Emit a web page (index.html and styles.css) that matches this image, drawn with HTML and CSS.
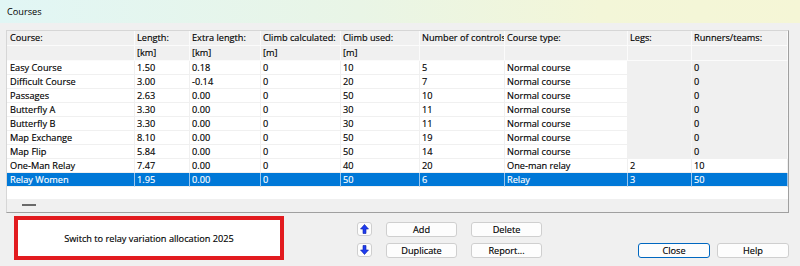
FILE: index.html
```html
<!DOCTYPE html>
<html lang="en">
<head>
    <meta charset="UTF-8">
    <title>Courses</title>
    <link rel="stylesheet" href="styles.css">
</head>
<body>
    <div class="titlebar">Courses</div>

    <div class="grid">
        <div class="hd first">Course:</div>
        <div class="hd">Length:</div>
        <div class="hd">Extra length:</div>
        <div class="hd">Climb calculated:</div>
        <div class="hd">Climb used:</div>
        <div class="hd">Number of controls</div>
        <div class="hd">Course type:</div>
        <div class="hd">Legs:</div>
        <div class="hd">Runners/teams:</div>

        <div class="hd first"></div>
        <div class="hd">[km]</div>
        <div class="hd">[km]</div>
        <div class="hd">[m]</div>
        <div class="hd">[m]</div>
        <div class="hd"></div>
        <div class="hd"></div>
        <div class="hd"></div>
        <div class="hd"></div>

        <div class="c first">Easy Course</div><div class="c">1.50</div><div class="c">0.18</div><div class="c">0</div><div class="c">10</div><div class="c">5</div><div class="c">Normal course</div><div class="c ro"></div><div class="c ro">0</div>
        <div class="c first">Difficult Course</div><div class="c">3.00</div><div class="c">-0.14</div><div class="c">0</div><div class="c">20</div><div class="c">7</div><div class="c">Normal course</div><div class="c ro"></div><div class="c ro">0</div>
        <div class="c first">Passages</div><div class="c">2.63</div><div class="c">0.00</div><div class="c">0</div><div class="c">50</div><div class="c">10</div><div class="c">Normal course</div><div class="c ro"></div><div class="c ro">0</div>
        <div class="c first">Butterfly A</div><div class="c">3.30</div><div class="c">0.00</div><div class="c">0</div><div class="c">30</div><div class="c">11</div><div class="c">Normal course</div><div class="c ro"></div><div class="c ro">0</div>
        <div class="c first">Butterfly B</div><div class="c">3.30</div><div class="c">0.00</div><div class="c">0</div><div class="c">30</div><div class="c">11</div><div class="c">Normal course</div><div class="c ro"></div><div class="c ro">0</div>
        <div class="c first">Map Exchange</div><div class="c">8.10</div><div class="c">0.00</div><div class="c">0</div><div class="c">50</div><div class="c">19</div><div class="c">Normal course</div><div class="c ro"></div><div class="c ro">0</div>
        <div class="c first">Map Flip</div><div class="c">5.84</div><div class="c">0.00</div><div class="c">0</div><div class="c">50</div><div class="c">14</div><div class="c">Normal course</div><div class="c ro"></div><div class="c ro">0</div>
        <div class="c first">One-Man Relay</div><div class="c">7.47</div><div class="c">0.00</div><div class="c">0</div><div class="c">40</div><div class="c">20</div><div class="c">One-man relay</div><div class="c">2</div><div class="c">10</div>
        <div class="c sel first">Relay Women</div><div class="c sel">1.95</div><div class="c sel">0.00</div><div class="c sel">0</div><div class="c sel">50</div><div class="c sel">6</div><div class="c sel">Relay</div><div class="c sel">3</div><div class="c sel">50</div>

        <div class="blank"></div>
        <div class="scroll"><span class="dash"></span></div>
    </div>

    <div class="bottom">
        <div class="notice"><span>Switch to relay variation allocation 2025</span></div>

        <div class="tools">
            <button class="btn arrow" title="Up">
                <svg width="9" height="10" viewBox="0 0 9 10"><path d="M4.5 0.5 L8.5 5 L6 5 L6 9.5 L3 9.5 L3 5 L0.5 5 Z" fill="#1f3cf0" stroke="#0a1fa8" stroke-width="0.6"/></svg>
            </button>
            <button class="btn">Add</button>
            <button class="btn">Delete</button>
            <button class="btn arrow" title="Down">
                <svg width="9" height="10" viewBox="0 0 9 10"><path d="M4.5 9.5 L8.5 5 L6 5 L6 0.5 L3 0.5 L3 5 L0.5 5 Z" fill="#1f3cf0" stroke="#0a1fa8" stroke-width="0.6"/></svg>
            </button>
            <button class="btn">Duplicate</button>
            <button class="btn">Report...</button>
        </div>

        <div class="dialog">
            <button class="btn default">Close</button>
            <button class="btn">Help</button>
        </div>
    </div>
</body>
</html>
```

FILE: styles.css
```css
* {
    box-sizing: border-box;
}
html, body {
    margin: 0;
    padding: 0;
}
body {
    width: 800px;
    height: 266px;
    overflow: hidden;
    background: #f0f0f0;
    font-family: "Open Sans", "Noto Sans", sans-serif;
    font-size: 9.2px;
    color: #000;
    -webkit-text-stroke: 0.15px #000;
}
.titlebar {
    height: 23px;
    line-height: 23px;
    padding-left: 7px;
    -webkit-text-stroke: 0;
    background: linear-gradient(90deg, #e1f6f5 0%, #e9f5e6 45%, #f3f6d8 75%, #f5f6d6 100%);
}
.grid {
    margin: 7px 0 0 6px;
    width: 783px;
    display: grid;
    grid-template-columns: 128px 55px 71px 80px 79px 85px 123px 64px 96px;
    grid-template-rows: 15px 15px repeat(9, 14px) 12px 13px;
    background: #f0f0f0;
    border: 1px solid;
    border-color: #d6d6d6 #a0a0a0 #a0a0a0 #d6d6d6;
}
.hd, .c {
    padding-left: 2px;
    white-space: nowrap;
    overflow: hidden;
    border-right: 1px solid #f0f0f0;
    border-bottom: 1px solid #f0f0f0;
}
.hd {
    line-height: 14px;
    background: #f0f0f0;
    border-color: #fbfbfb;
}
.c {
    line-height: 13px;
    background: #fff;
}
.first {
    padding-left: 3px;
}
.c.ro {
    background: #f0f0f0;
    border-right-color: #f7f7f7;
}
.c.sel {
    background: #0078d7;
    color: #fff;
    -webkit-text-stroke: 0.15px #fff;
    border-right-color: #9cc6ec;
    border-bottom-color: #f0f0f0;
}
.blank {
    grid-column: 1 / -1;
    background: #fff;
}
.scroll {
    grid-column: 1 / -1;
    background: #f0f0f0;
}
.dash {
    display: block;
    width: 14px;
    height: 2px;
    margin: 5px 0 0 15px;
    background: #6a6a6a;
}
.bottom {
    display: flex;
    align-items: flex-start;
    padding: 3px 0 0 14px;
}
.notice {
    width: 270px;
    height: 44px;
    border: 4px solid #e21b1f;
    background: #fff;
    display: flex;
    align-items: center;
    justify-content: center;
}
.notice span {
    padding-top: 1px;
}
.tools {
    margin: 6px 0 0 73px;
    display: grid;
    grid-template-columns: 15px 71px 71px;
    grid-template-rows: 15px 15px;
    column-gap: 14px;
    row-gap: 6px;
}
.btn {
    font: inherit;
    color: #000;
    height: 15px;
    padding: 0;
    background: #fdfdfd;
    border: 1px solid #cfcfcf;
    border-radius: 3px;
    line-height: 12px;
    text-align: center;
}
.arrow {
    display: flex;
    align-items: center;
    justify-content: center;
    height: 14px;
}
.dialog {
    margin: 27px 0 0 96px;
    display: flex;
    gap: 7px;
}
.dialog .btn {
    width: 72px;
}
.btn.default {
    border-color: #0067c0;
}
```
